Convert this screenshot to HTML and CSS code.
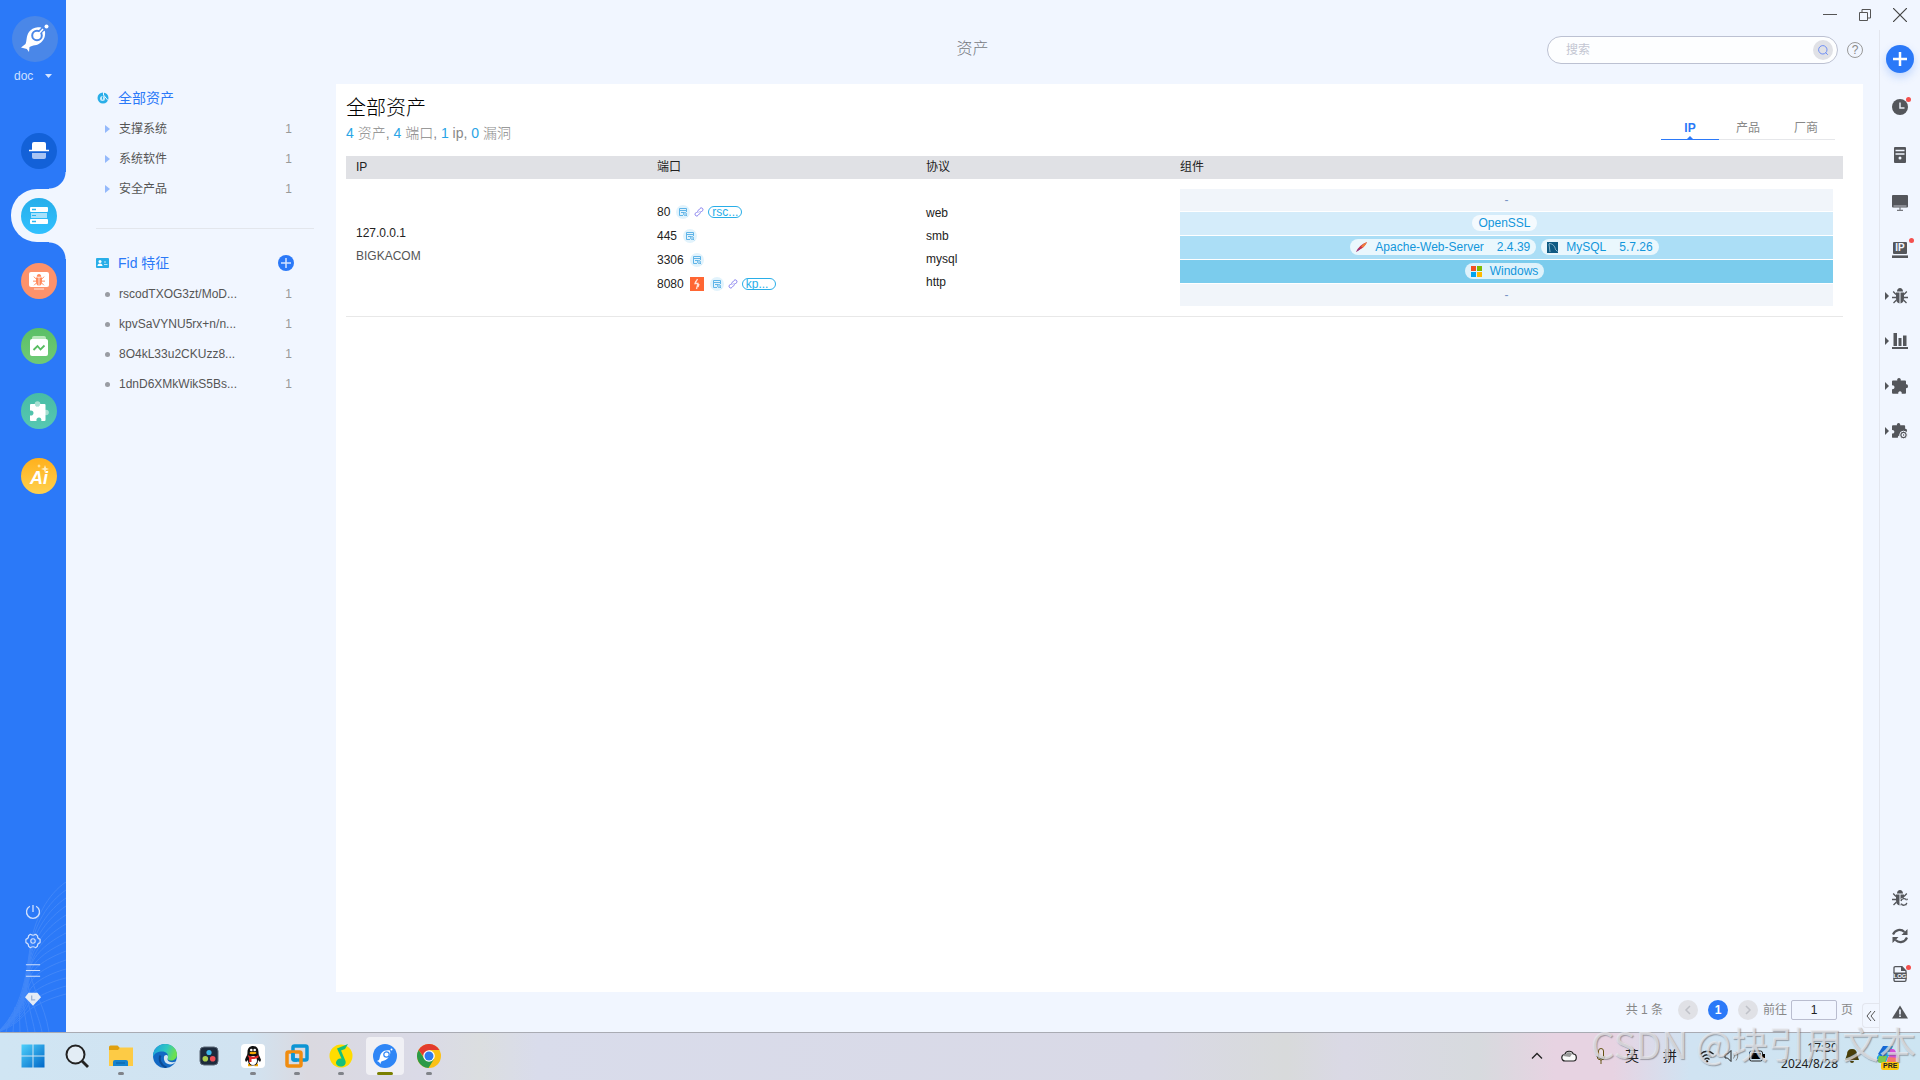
FILE: index.html
```
<!DOCTYPE html>
<html lang="zh-CN">
<head>
    <meta charset="UTF-8">
    <title>资产</title>
    <link rel="stylesheet" href="styles.css">
</head>
<body>
<!-- shared icons -->
<svg class="sprite">
    <symbol id="i-detail" viewBox="0 0 14 14">
        <circle cx="7" cy="7" r="7" fill="#e2f3fc"/>
        <path d="M10.500 7V3.500h-7v7H7M3 5.500h8M5 7.500h3" fill="none" stroke="#5fb4e8"/>
        <circle cx="9" cy="9" r="1.400" fill="none" stroke="#5fb4e8"/>
        <path d="M10 10l1.200 1.200" stroke="#5fb4e8"/>
    </symbol>
    <symbol id="i-link" viewBox="0 0 10 10">
        <path d="M4.200 5.800c-.8-.8-.6-1.700 0-2.300L6 1.500c1.700-1.700 4 .6 2.400 2.300L7.300 5M5.800 4.200c.8.8.6 1.700 0 2.300L4 8.400c-1.700 1.700-4-.6-2.400-2.300L2.700 5" fill="none" stroke="#8079ee"/>
    </symbol>
    <symbol id="i-puzzle" viewBox="0 0 16 16">
        <path d="M1 2.500h4.300C4.800 1 5.800 0 7 0s2.200 1 1.700 2.500H13q1 0 1 1v2.800c1.200-.3 2 .6 2 1.900s-.8 2.200-2 1.900V15q0 .8-1 .8H9.700c.3-1.600-.5-2.600-1.700-2.600s-2 1-1.700 2.600H1q-1 0-1-1v-3.600c1.500.2 2.500-.6 2.500-1.900S1.500 7.200 0 7.400V3.500q0-1 1-1z"/>
    </symbol>
    <symbol id="i-bug" viewBox="0 0 16 16">
        <path d="M5 3.500C5 1.500 6.300 0 8 0s3 1.500 3 3.500zM4 4.500h3.500V15.500C5 15 4 13 4 10zM8.500 4.500H12V10c0 3-1 5-3.500 5.500z"/>
        <path d="M4 6.500L1.200 3.500M4 9.500H0M4.500 12l-3 3M12 6.500l2.800-3M12 9.500h4M11.500 12l3 3" fill="none" stroke="currentColor" stroke-width="1.300"/>
    </symbol>
</svg>

<div class="window">
    <div class="sidebar">
        <svg class="waves" viewBox="0 0 66 150" fill="none" stroke="#fff">
            <path d="M0 148C22 125 26 95 30 66S48 12 66 0"/>
            <path d="M0 148C24 125 26 97 30 70S48 20 66 8"/>
            <path d="M0 149C24 127 26 99 30 74S48 28 66 16"/>
            <path d="M0 149C24 128 26 101 30 78S48 36 66 24"/>
            <path d="M0 149C24 129 26 103 30 82S48 44 66 33"/>
            <path d="M0 149C24 130 26 105 30 86S48 52 66 42"/>
            <path d="M0 149C24 131 26 107 29 90S48 60 66 51"/>
            <path d="M0 149C24 132 26 109 29 94S48 68 66 60"/>
            <path d="M0 149C22 133 26 111 29 98S48 76 66 69"/>
            <path d="M0 149C22 134 26 115 29 104S48 84 66 78"/>
            <path d="M0 149C22 135 26 119 29 110S48 92 66 87"/>
            <path d="M0 149C22 136 26 123 29 116S48 100 66 96"/>
            <path d="M0 149C22 138 26 127 29 122S48 109 66 104"/>
            <path d="M0 149C20 142 25 130 32 126S50 116 66 112"/>
            <path d="M28 80C32 110 44 120 49 150M26 92C30 120 38 130 42 150M25 100C28 124 32 135 35 150M22 110C24 130 26 140 28 150M19 118L20 150M15 125L13 150M10 135L6 150"/>
        </svg>
        <div class="side-top">
            <a class="logo" href="#" title="logo">
                <svg width="30" height="30" viewBox="0 0 30 30">
                    <path d="M5.500 20c1.500-3 .5-8 3.500-12 3.500-4.500 9-5 12-4.500l2 1.500 2 2.500c.5 4-.5 8-4 11-4 3.500-8.500 2.500-11.500 4.500L9 28l-2.200-3L1 23.500z" fill="#fff"/>
                    <circle cx="17" cy="11.500" r="4.800" fill="#fff" stroke="#4a87e8" stroke-width="2"/>
                    <path d="M20 8l4-4" stroke="#4a87e8" stroke-width="4"/>
                    <path d="M19 9.500l4-4.500" stroke="#fff" stroke-width="1.500"/>
                    <circle cx="26.500" cy="2.500" r="2" fill="#fff"/>
                </svg>
            </a>
            <div class="project">
                <select aria-label="项目"><option>doc</option></select>
                <svg width="7" height="4" viewBox="0 0 7 4"><path d="M0 0h7L3.500 4z" fill="#d5e4ff"/></svg>
            </div>
        </div>
        <div class="side-nav">
            <a href="#" title="首页"><span class="dot dark">
                <svg width="20" height="18" viewBox="0 0 20 18">
                    <path d="M3 8.500V2q0-2 2-2h10q2 0 2 2v6.500z" fill="#fff"/>
                    <path d="M3 11h14v4q0 2-2 2H5q-2 0-2-2z" fill="#a9c4f3"/>
                    <path d="M0 8.500h20" stroke="#fff" stroke-width="1.500"/>
                </svg>
            </span></a>
            <a href="#" title="资产" class="active"><span class="dot cyan">
                <svg width="18" height="18" viewBox="0 0 18 18">
                    <rect x="0" y="0" width="18" height="5" rx="1" fill="#fff"/>
                    <rect x="1" y="6" width="16" height="5" fill="#a8e1fb"/>
                    <rect x="0" y="12" width="18" height="5" rx="1" fill="#fff"/>
                    <path d="M2 2.500h4M2 14.500h4" stroke="#2cb6f2" stroke-width="1.500"/>
                    <path d="M2 8.500h4" stroke="#2cb6f2"/>
                </svg>
            </span></a>
            <a href="#" title="漏洞"><span class="dot orange">
                <svg width="20" height="20" viewBox="0 0 20 20">
                    <rect x="0" y="1" width="20" height="15" rx="2" fill="#fff"/>
                    <path d="M5 18h10" stroke="#ffc9b5" stroke-width="1.500"/>
                    <svg x="4" y="3" width="12" height="12" color="#ff8a5c" fill="#ff8a5c"><use href="#i-bug"/></svg>
                </svg>
            </span></a>
            <a href="#" title="报告"><span class="dot green">
                <svg width="18" height="20" viewBox="0 0 18 20">
                    <rect x="2" y="0" width="14" height="5" rx="2" fill="#b9e8bb"/>
                    <rect x="0" y="3" width="18" height="17" rx="2" fill="#fff"/>
                    <path d="M3.500 14l4-4 3 3.500 4-4" fill="none" stroke="#57bd60" stroke-width="1.800"/>
                </svg>
            </span></a>
            <a href="#" title="插件"><span class="dot teal">
                <svg width="20" height="20" viewBox="0 0 20 20">
                    <circle cx="8.500" cy="3" r="2.800" fill="#a7e0d2"/>
                    <circle cx="17" cy="11.500" r="2.800" fill="#a7e0d2"/>
                    <path d="M1 4q0-1 1-1h4c0 2 1 2.500 2.500 2.500S11 5 11 3h4.500q1 0 1 1v15q0 1-1 1h-3.200c.5-2-.6-3.500-2.300-3.500s-3 1.500-2.500 3.500H2q-1 0-1-1v-4.500c2.300.5 3.500-.8 3.500-2.500S3.300 9 1 9.500z" fill="#fff"/>
                </svg>
            </span></a>
            <a href="#" title="AI"><span class="dot yellow">
                <b>Ai</b>
                <svg width="12" height="10" viewBox="0 0 12 10">
                    <path d="M8 1l1 3 3 1-3 1-1 3-1-3-3-1 3-1zM2 0l.6 1.400L4 2l-1.400.6L2 4l-.6-1.400L0 2l1.400-.6z" fill="#ffedc0"/>
                </svg>
            </span></a>
        </div>
        <div class="side-tools">
            <button title="退出"><svg viewBox="0 0 18 18"><path d="M9 1v8M5.500 2.500a7.300 7.300 0 1 0 7 0" fill="none" stroke="#cfdffc" stroke-width="1.500"/></svg></button>
            <button title="设置"><svg viewBox="0 0 18 18"><path d="M6 1.500Q9 3.500 12 1.500L14 3Q13.500 6 17 7.200V10.800Q13.500 12 14 15L12 16.500Q9 14.500 6 16.500L4 15Q4.500 12 1 10.800V7.200Q4.500 6 4 3z" fill="none" stroke="#cfdffc" stroke-width="1.300" stroke-linejoin="round"/><circle cx="9" cy="9" r="2.500" fill="none" stroke="#cfdffc" stroke-width="1.300"/></svg></button>
            <button title="菜单"><svg viewBox="0 0 18 18"><path d="M1 3h16M1 9.500h16M1 16h16" stroke="#cfdffc" stroke-width="1.200"/></svg></button>
            <button title="授权"><svg viewBox="0 0 18 18"><path d="M4 2h10l4 5-9 9.500L0 7z" fill="#e4ebf6"/><path d="M7.500 5v5h4" fill="none" stroke="#9fb4d6" stroke-width="1.500"/></svg></button>
        </div>
    </div>

    <div class="body">
        <div class="titlebar">
            <button title="最小化"><svg viewBox="0 0 14 14"><path d="M0 6.500h14" stroke="#555"/></svg></button>
            <button title="还原"><svg viewBox="0 0 14 14"><path d="M1.500 4.500h8v8h-8zM4 4V1.500h8.500v8.500H10" fill="none" stroke="#555"/></svg></button>
            <button title="关闭"><svg viewBox="0 0 14 14"><path d="M0 0l14 14M14 0L0 14" stroke="#444" stroke-width="1.200"/></svg></button>
        </div>
        <div class="row">
            <div class="workspace">
                <div class="header">
                    <span></span>
                    <h1>资产</h1>
                    <div class="header-right">
                        <div class="search">
                            <input type="text" placeholder="搜索" aria-label="搜索">
                            <button title="搜索"><svg width="10" height="10" viewBox="0 0 10 10"><circle cx="4.800" cy="4.800" r="4.200" fill="none" stroke="#6d8df5"/><path d="M7.500 7.500L9.800 9.800" stroke="#6d8df5"/></svg></button>
                        </div>
                        <a class="help" href="#">?</a>
                    </div>
                </div>
                <div class="columns">
                    <div class="filters">
                        <div class="group">
                            <h2>
                                <svg width="13" height="12" viewBox="0 0 13 12"><circle cx="7" cy="6" r="5.500" fill="#29aee8"/><path d="M7.500 0v3l4.500 5.500" fill="none" stroke="#f1f6ff"/><circle cx="6.500" cy="6.500" r="2.500" fill="#c8ebfa"/><path d="M6.500 4.500v3" stroke="#29aee8"/></svg>
                                全部资产
                            </h2>
                            <ul>
                                <li class="tri"><a href="#">支撑系统</a><span>1</span></li>
                                <li class="tri"><a href="#">系统软件</a><span>1</span></li>
                                <li class="tri"><a href="#">安全产品</a><span>1</span></li>
                            </ul>
                        </div>
                        <div class="group">
                            <h2>
                                <svg width="13" height="10" viewBox="0 0 13 10"><rect width="13" height="10" rx="1" fill="#29aee8"/><circle cx="4" cy="3.500" r="1.500" fill="#fff"/><path d="M1.500 8q0-2.500 2.500-2.500T6.500 8z" fill="#fff"/><path d="M8 4h2M8 6.500h3.500" stroke="#b9e5f8"/></svg>
                                Fid 特征
                                <button title="添加"><svg width="16" height="16" viewBox="0 0 16 16"><circle cx="8" cy="8" r="8" fill="#2b79f8"/><path d="M3 8h10M8 3v10" stroke="#d5e4ff" stroke-width="1.500"/></svg></button>
                            </h2>
                            <ul>
                                <li class="pt"><a href="#">rscodTXOG3zt/MoD...</a><span>1</span></li>
                                <li class="pt"><a href="#">kpvSaVYNU5rx+n/n...</a><span>1</span></li>
                                <li class="pt"><a href="#">8O4kL33u2CKUzz8...</a><span>1</span></li>
                                <li class="pt"><a href="#">1dnD6XMkWikS5Bs...</a><span>1</span></li>
                            </ul>
                        </div>
                    </div>

                    <div class="content">
                        <div class="panel">
                            <div class="panel-head">
                                <div>
                                    <h3>全部资产</h3>
                                    <p><b>4</b> 资产, <b>4</b> 端口, <b>1</b> ip, <b>0</b> 漏洞</p>
                                </div>
                                <div class="tabs">
                                    <a href="#" class="on">IP</a>
                                    <a href="#">产品</a>
                                    <a href="#">厂商</a>
                                </div>
                            </div>
                            <table>
                                <thead>
                                <tr>
                                    <th class="c-ip">IP</th>
                                    <th class="c-port">端口</th>
                                    <th class="c-proto">协议</th>
                                    <th>组件</th>
                                </tr>
                                </thead>
                                <tbody>
                                <tr>
                                    <td class="lines addr">
                                        <div>127.0.0.1</div>
                                        <div class="host">BIGKACOM</div>
                                    </td>
                                    <td class="ports">
                                        <div><span>80</span><svg class="detail"><use href="#i-detail"/></svg><svg class="link"><use href="#i-link"/></svg><button>rsc...</button></div>
                                        <div><span>445</span><svg class="detail"><use href="#i-detail"/></svg></div>
                                        <div><span>3306</span><svg class="detail"><use href="#i-detail"/></svg></div>
                                        <div><span>8080</span><svg class="burp" viewBox="0 0 14 14"><rect width="14" height="14" fill="#ff6633"/><path d="M7.500 2L5 6.500h3L6.500 12M6 4l-1 2.500M9 7l-1 3" fill="none" stroke="#ffe2d8" stroke-width="1.300"/></svg><svg class="detail"><use href="#i-detail"/></svg><svg class="link"><use href="#i-link"/></svg><button>kp...</button></div>
                                    </td>
                                    <td class="lines">
                                        <div>web</div>
                                        <div>smb</div>
                                        <div>mysql</div>
                                        <div>http</div>
                                    </td>
                                    <td class="stack">
                                        <div class="layer empty">-</div>
                                        <div class="layer l1"><span class="tag">OpenSSL</span></div>
                                        <div class="layer l2">
                                            <span class="tag"><svg width="11" height="11" viewBox="0 0 11 11"><path d="M0 10Q3 3 11 0 9 5 3 8z" fill="#c8324b"/><path d="M5 4.500Q7 1.500 11 0 10 3 7 5.500z" fill="#f0803c"/><path d="M0 10L3 6l1 1.500z" fill="#8a3a8c"/></svg>Apache-Web-Server<i>2.4.39</i></span>
                                            <span class="tag"><svg width="11" height="11" viewBox="0 0 11 11"><rect width="11" height="11" fill="#0f5a83"/><path d="M2 1.500c4 0 6 3 6.500 6l2 2M2 2c0 3 1 5 1 8" fill="none" stroke="#a9cde0" stroke-width=".8"/></svg>MySQL<i>5.7.26</i></span>
                                        </div>
                                        <div class="layer l3">
                                            <span class="tag"><svg width="11" height="11" viewBox="0 0 11 11"><path d="M0 0h5v5H0z" fill="#f25022"/><path d="M6 0h5v5H6z" fill="#7fba00"/><path d="M0 6h5v5H0z" fill="#00a4ef"/><path d="M6 6h5v5H6z" fill="#ffb900"/></svg>Windows</span>
                                        </div>
                                        <div class="layer empty">-</div>
                                    </td>
                                </tr>
                                </tbody>
                            </table>
                        </div>
                        <div class="pager">
                            <span>共 1 条</span>
                            <button title="上一页"><svg width="8" height="10" viewBox="0 0 8 10"><path d="M6 1L2 5l4 4" fill="none" stroke="#bfc1c8" stroke-width="1.500"/></svg></button>
                            <button class="cur">1</button>
                            <button title="下一页"><svg width="8" height="10" viewBox="0 0 8 10"><path d="M2 1l4 4-4 4" fill="none" stroke="#bfc1c8" stroke-width="1.500"/></svg></button>
                            <label>前往<input type="text" value="1">页</label>
                        </div>
                    </div>
                </div>
                <button class="fold" title="收起"><svg width="10" height="12" viewBox="0 0 10 12"><path d="M5 1L1 6l4 5M9 1L5 6l4 5" fill="none" stroke="#555"/></svg></button>
            </div>

            <div class="rail">
                <button class="add" title="新建"><svg width="28" height="28" viewBox="0 0 28 28"><path d="M14 7v14M7 14h14" stroke="#fff" stroke-width="2.500"/></svg></button>
                <button class="tall red"><svg viewBox="0 0 16 16"><circle cx="8" cy="8" r="8"/><path d="M8 3.500V9h4.500" fill="none" stroke="#e6eaf2" stroke-width="1.500"/></svg></button>
                <button class="tall"><svg viewBox="0 0 16 16"><rect x="2" y="0" width="12" height="16" rx="1"/><path d="M3.500 3.500h9M3.500 7h9" stroke="#f1f6ff" stroke-width="1.500"/><circle cx="8" cy="11" r="1.500" fill="#f1f6ff"/></svg></button>
                <button class="tall"><svg viewBox="0 0 16 16"><rect x="0" y="0" width="16" height="12.500" rx="1"/><path d="M1.500 11h13" stroke="#9a9ca3" stroke-width="1.500"/><path d="M8 12v3M5 15.300h6" stroke="#77797f" stroke-width="1.200"/></svg></button>
                <button class="red ip"><svg viewBox="0 0 16 16"><rect x="1" y="0" width="14" height="12" rx="1"/><path d="M0 14.700h16" stroke="#54565b" stroke-width="2.600"/></svg><b>IP</b></button>
                <button class="more"><svg viewBox="0 0 16 16"><use href="#i-bug"/></svg></button>
                <button class="more"><svg viewBox="0 0 16 16"><path d="M1.500 0H5v13H1.500zM6.500 5H9.500v8h-3zM11 2.500h3.500V13H11zM0 14h16v2H0z"/></svg></button>
                <button class="more"><svg viewBox="0 0 16 16"><use href="#i-puzzle"/></svg></button>
                <button class="more"><svg viewBox="0 0 16 16"><use href="#i-puzzle" width="15" height="15"/><circle cx="11.500" cy="12" r="3.800" stroke="#f1f6ff"/><circle cx="11.500" cy="12" r="2" fill="#f1f6ff"/><path d="M11 11l1.500 1-1.500 1z"/></svg></button>
                <div class="rail-bottom">
                    <button><svg viewBox="0 0 16 16"><svg width="14" height="14" viewBox="0 0 16 16"><use href="#i-bug"/></svg><circle cx="11.800" cy="11.800" r="4" fill="#f1f6ff"/><path d="M9 11a3 3 0 0 1 5.600-.8M14.800 12.800a3 3 0 0 1-5.600.8" fill="none" stroke="#54565b" stroke-width="1.400"/></svg></button>
                    <button><svg viewBox="0 0 16 16"><path d="M1 6.500C3 1.500 9 .5 12.500 4M15 9.500c-2 5-8 6-11.500 2.500" fill="none" stroke="#54565b" stroke-width="2.200"/><path d="M15.500 1v6H9.500zM.5 15V9h6z"/></svg></button>
                    <button class="red log"><svg viewBox="0 0 16 16"><path d="M2 7V2q0-1.300 1.300-1.300H10L14 5v9q0 1.300-1.300 1.300H3.300Q2 15.300 2 14v-2" fill="none" stroke="#54565b" stroke-width="1.300"/><path d="M9 0v5h5zM1.500 6.500h13V13h-13z"/></svg><b>LOG</b></button>
                    <button><svg viewBox="0 0 16 16"><path d="M8 1.500l8 13H0z"/><path d="M8 5.500v5M8 11.500v1.600" stroke="#f1f6ff" stroke-width="1.600"/></svg></button>
                </div>
            </div>
        </div>
    </div>
</div>

<div class="taskbar">
    <div class="apps">
        <button title="开始"><svg viewBox="0 0 24 24"><defs><linearGradient id="g-win" x2="1" y2="1"><stop stop-color="#4fd0fb"/><stop offset="1" stop-color="#0067c8"/></linearGradient></defs><path d="M.5.5h11v11H.5zM12.500.5h11v11h-11zM.5 12.500h11v11H.5zM12.500 12.500h11v11h-11z" fill="url(#g-win)"/></svg></button>
        <button title="搜索"><svg viewBox="0 0 24 24"><circle cx="10.500" cy="10.500" r="9" fill="#e3edf5" stroke="#222" stroke-width="2"/><path d="M17 17l6 6" stroke="#222" stroke-width="2.800"/></svg></button>
        <button title="文件" class="run"><svg viewBox="0 0 24 24"><path d="M0 3q0-1.500 1.500-1.500h7L11 4v4H0z" fill="#e0a010"/><path d="M0 6h9l2-2.500h13V22H0z" fill="#fdcb45"/><path d="M4 22v-4q0-2 2-2h11q2 0 2 2v4z" fill="#1583cf"/><path d="M7 19h9" stroke="#0a5ea3"/></svg></button>
        <button title="Edge"><svg viewBox="0 0 24 24"><defs><linearGradient id="g-edge" x2="1" y2=".3"><stop stop-color="#1b9de2"/><stop offset=".6" stop-color="#2fc8c0"/><stop offset="1" stop-color="#6be04f"/></linearGradient></defs><circle cx="12" cy="12" r="12" fill="#1269c4"/><path d="M0 11C1 4 6 0 12 0c7 0 12 5 12 10.500 0 4-3 6-6 6s-4-1.500-3.500-3C16 10 13 7.500 9 7.500S1.500 9 0 13z" fill="url(#g-edge)"/><path d="M11 13c0-2 3-3 3.800-1 .7 2-1 2.500.2 4.500s5 2 8 1c-2.500 2.500-5 3.500-8 2.500-3-1-4.500-4-4-7z" fill="#d3e5f2"/><path d="M7.500 11.500c-2 4 0 10 6 12" fill="none" stroke="#0c4a94" stroke-width="2"/></svg></button>
        <button title="Resolve"><svg viewBox="0 0 24 24"><rect x="3" y="3" width="18" height="18" rx="4" fill="#1d2a3c" stroke="#5a6675"/><circle cx="12" cy="8.500" r="2.600" fill="#3bb6e8"/><circle cx="8.300" cy="14.800" r="2.800" fill="#a8cc4b"/><circle cx="15.700" cy="14.800" r="2.800" fill="#ec4d55"/></svg></button>
        <button title="QQ" class="run"><svg viewBox="0 0 24 24"><rect width="24" height="24" rx="4" fill="#fff"/><path d="M7 21h3.500M13.500 21H17" stroke="#f5a800" stroke-width="2.500"/><path d="M4 16c1-4 2.500-4 2.500-8C6.500 4 9 2 12 2s5.500 2 5.500 6c0 4 1.500 4 2.500 8l-1 2-2-2c0 4-2 5.500-5 5.500S7 20 7 16l-2 2z" fill="#111"/><ellipse cx="12" cy="16.500" rx="4" ry="4.500" fill="#fff"/><path d="M6.500 11q5.500 3.500 11 0v2.500q-4 2-7 1.500V18H8v-4z" fill="#e02828"/><ellipse cx="12" cy="9" rx="3.500" ry="1.200" fill="#f5a800"/><circle cx="10.300" cy="6" r="1.300" fill="#fff"/><circle cx="13.700" cy="6" r="1.300" fill="#fff"/></svg></button>
        <button title="VMware" class="run"><svg viewBox="0 0 24 24" fill="none" stroke-width="3.500"><rect x="8" y="2" width="14" height="14" rx="1.500" stroke="#0d95d4"/><rect x="2" y="8" width="14" height="14" rx="1.500" stroke="#f08c0f"/><path d="M8 9v5.500q0 1.500 1.500 1.500H12" stroke="#0d95d4"/></svg></button>
        <button title="QQ音乐" class="run"><svg viewBox="0 0 24 24"><circle cx="12" cy="12" r="11.500" fill="#ffdc00"/><path d="M8 4.500L19 0l-3 5-4 1.500 4.500 10.500c1 4-2.500 6-5.500 5.500s-5-3-3.500-5.500 3-2.500 5-2.500z" fill="#14c07c"/></svg></button>
        <button title="Goby" class="run front"><svg viewBox="0 0 24 24"><circle cx="12" cy="12" r="12" fill="#2f86f6"/><path d="M6 16c1-2 .5-4.500 2.500-7S14 6 17 6.500c1 3-.5 6-2.500 8S10 16.500 8 17.800L7.500 20 6 18l-2-1z" fill="#fff"/><circle cx="13.500" cy="10.500" r="2.700" fill="#fff" stroke="#2f86f6" stroke-width="1.200"/><circle cx="18.500" cy="5.500" r="1" fill="#fff"/></svg></button>
        <button title="Chrome" class="run"><svg viewBox="0 0 24 24"><circle cx="12" cy="12" r="12" fill="#fbc116"/><path d="M1.600 6A12 12 0 0 1 22.400 6H12L8 14.500z" fill="#e33b2e"/><path d="M1.600 6A12 12 0 0 0 11.500 24L17 15l-9 .5z" fill="#2a9a48"/><circle cx="12" cy="12" r="5.800" fill="#fff"/><circle cx="12" cy="12" r="4.500" fill="#2f7bf0"/></svg></button>
    </div>
    <div class="tray">
        <button title="更多"><svg viewBox="0 0 16 16"><path d="M3 10.500l5-5 5 5" fill="none" stroke="#222" stroke-width="1.300"/></svg></button>
        <button title="云"><svg viewBox="0 0 16 16"><path d="M.8 9.500c0-2 1.500-3 3-3 1-4 7-4.500 8.500-.5 1.700 0 3 1.500 3 3.500S14 13 12.500 13H4C2 13 .8 11.500.8 9.500z" fill="#fafafa" stroke="#222" stroke-width="1.200"/><path d="M2 8c1-2 2-2 3-2 1-2.500 5-2.500 6 0L9 9z" fill="#999"/></svg></button>
        <button title="麦克风"><svg viewBox="0 0 16 16"><rect x="5.500" y=".5" width="5" height="10" rx="2.500" fill="#eadfe6" stroke="#655212"/><path d="M4 8q0 4 4 4t4-4M8 12v4" fill="none" stroke="#655212"/></svg></button>
        <span class="ime">英</span>
        <span class="ime">拼</span>
        <div class="status">
            <svg viewBox="0 0 16 16"><path d="M1 6.500q7-6.500 14 0M3.500 9q4.500-4.500 9 0M5.500 11.500q2.500-2.500 5 0" fill="none" stroke="#222" stroke-width="1.200"/><circle cx="8" cy="13.500" r="1.200"/></svg>
            <svg viewBox="0 0 16 16"><path d="M1 6h2.500L7 2.500v11L3.500 10H1z" fill="none" stroke="#222"/><path d="M9.500 5.500q2 2.500 0 5M12 3.500q3.500 4.500 0 9" fill="none" stroke="#888"/></svg>
            <svg viewBox="0 0 16 16"><rect x=".5" y="3" width="13" height="10" rx="2" fill="none" stroke="#222"/><rect x="2.500" y="5" width="9" height="6"/><path d="M14 6h2v4h-2zM1 1l5 6"/></svg>
        </div>
        <div class="clock"><div>17:30</div><div>2024/8/28</div></div>
        <svg class="bell" viewBox="0 0 16 16"><path d="M8 1q5 0 5 5.500L15 12H1l2-5.500Q3 1 8 1zM6 13h4q0 2-2 2t-2-2z" fill="#4a3f08"/></svg>
        <div class="copilot">
            <svg viewBox="0 0 24 24"><path d="M9 2h8L10 18H4q-4 0-3-5z" fill="#22a3e6"/><path d="M2 10l5-8h6L8 14z" fill="#1768d4"/><path d="M3 12h8l-2 7H4q-4 0-1-7z" fill="#7bc950"/><path d="M14 5h3q2 0 3 3l3 6q1 5-3 5h-8z" fill="#d54fd6"/><path d="M12 13l11 1q0 6-5 6h-8z" fill="#f47a6a"/></svg>
            <b>PRE</b>
        </div>
    </div>
    <div class="watermark">CSDN @块引用文本</div>
</div>
</body>
</html>
```

FILE: styles.css
```
*{
    margin: 0;
    padding: 0;
    box-sizing: border-box;
}
body{
    height: 100vh;
    display: flex;
    flex-direction: column;
    overflow: hidden;
    background: #f1f6ff;
    color: #222;
    font: 12px/20px "Liberation Sans", "Noto Sans CJK SC", sans-serif;
}
ul{
    list-style: none;
}
a{
    text-decoration: none;
    color: inherit;
}
button, input, select{
    font: inherit;
    color: inherit;
    border: 0;
    background: none;
    outline: none;
}
button{
    cursor: pointer;
}
h1, h2, h3, th{
    font-weight: normal;
}
svg{
    display: block;
    flex: none;
}
.sprite{
    position: absolute;
    width: 0;
    height: 0;
}
.window{
    flex: 1;
    min-height: 0;
    display: flex;
}

/* left bar */
.sidebar{
    position: relative;
    width: 66px;
    flex: none;
    display: flex;
    flex-direction: column;
    background: #2b79f8;
}
.waves{
    position: absolute;
    left: 0;
    bottom: 0;
    width: 66px;
    height: 150px;
    opacity: .1;
}
.side-top{
    height: 118px;
    padding: 16px 0 0 12px;
}
.logo{
    display: flex;
    align-items: center;
    justify-content: center;
    width: 46px;
    height: 46px;
    border-radius: 50%;
    background: #4a87e8;
}
.project{
    display: flex;
    align-items: center;
    margin-top: 4px;
    padding-left: 2px;
}
.project select{
    appearance: none;
    width: 31px;
    color: #cfe0ff;
}
.side-nav a{
    position: relative;
    display: flex;
    align-items: center;
    height: 53px;
    margin: 6px 0 12px 11px;
    padding-left: 10px;
}
.side-nav .active{
    background: #f1f6ff;
    border-radius: 26px 0 0 26px;
}
.side-nav .active:before,
.side-nav .active:after{
    content: "";
    position: absolute;
    right: 0;
    width: 17px;
    height: 17px;
}
.side-nav .active:before{
    top: -17px;
    background: radial-gradient(circle at 0 0, #2b79f8 16px, #f1f6ff 17px);
}
.side-nav .active:after{
    bottom: -17px;
    background: radial-gradient(circle at 0 100%, #2b79f8 16px, #f1f6ff 17px);
}
.dot{
    position: relative;
    display: flex;
    align-items: center;
    justify-content: center;
    width: 36px;
    height: 36px;
    border-radius: 50%;
}
.dark{ background: #1361d8; }
.cyan{ background: linear-gradient(#27aeea, #30c0ff); }
.orange{ background: #fd926b; }
.green{ background: linear-gradient(#5bbf66, #6fcb76); }
.teal{ background: linear-gradient(#48bca5, #56c8b2); }
.yellow{ background: linear-gradient(#ffb01c, #ffd04e); }
.yellow b{
    color: #fff;
    font-size: 18px;
    font-style: italic;
    padding-top: 5px;
}
.yellow svg{
    position: absolute;
    top: 6px;
    right: 8px;
}
.side-tools{
    margin-top: auto;
    padding-bottom: 19px;
    position: relative;
    display: flex;
    flex-direction: column;
    align-items: center;
}
.side-tools button{
    height: 29px;
}
.side-tools svg{
    width: 16px;
    height: 16px;
}

/* top */
.body{
    flex: 1;
    min-width: 0;
    display: flex;
    flex-direction: column;
}
.titlebar{
    display: flex;
    justify-content: flex-end;
    gap: 21px;
    height: 30px;
    padding-right: 13px;
}
.titlebar svg{
    width: 14px;
    height: 14px;
}
.row{
    flex: 1;
    min-height: 0;
    display: flex;
}
.workspace{
    position: relative;
    flex: 1;
    min-width: 0;
    display: flex;
    flex-direction: column;
}
.header{
    display: grid;
    grid-template-columns: 1fr auto 1fr;
    height: 54px;
}
.header h1{
    font-size: 16px;
    font-weight: 300;
    line-height: 37px;
    color: #777a82;
}
.header-right{
    display: flex;
    justify-content: flex-end;
    gap: 9px;
    padding: 6px 16px 0 0;
}
.search{
    display: flex;
    align-items: center;
    width: 291px;
    height: 28px;
    padding: 0 4px 0 18px;
    border: 1px solid #bcc1d2;
    border-radius: 14px;
    background: #fdfeff;
}
.search input{
    flex: 1;
    min-width: 0;
}
.search input::placeholder{
    color: #c3c6d2;
}
.search button{
    display: flex;
    align-items: center;
    justify-content: center;
    width: 20px;
    height: 20px;
    border-radius: 50%;
    background: #e0e1e6;
}
.help{
    width: 16px;
    height: 16px;
    margin-top: 6px;
    border: 1px solid #999;
    border-radius: 50%;
    color: #888;
    line-height: 14px;
    text-align: center;
}
.columns{
    flex: 1;
    min-height: 0;
    display: flex;
}

/* filter list */
.filters{
    width: 270px;
    flex: none;
    padding: 0 22px 0 30px;
}
.group{
    padding-bottom: 24px;
    margin-bottom: 20px;
    border-bottom: 1px solid #e3e6ec;
}
.group:last-child{
    border: 0;
}
.group h2{
    display: flex;
    align-items: center;
    height: 30px;
    padding: 0 20px 2px 0;
    font-size: 14px;
    color: #2b79f8;
}
.group h2 > svg{
    margin-right: 9px;
}
.group h2 button{
    margin-left: auto;
}
.group li{
    display: flex;
    align-items: center;
    height: 30px;
    padding: 0 22px 0 9px;
    color: #555;
}
.group li span{
    margin-left: auto;
    color: #999;
}
.tri:before{
    content: "";
    border: 4px solid transparent;
    border-left: 5px solid #94b9fb;
    border-right: 0;
    margin-right: 9px;
}
.pt:before{
    content: "";
    width: 5px;
    height: 5px;
    border-radius: 50%;
    background: #999ca3;
    margin-right: 9px;
}

/* main panel */
.content{
    flex: 1;
    min-width: 0;
    display: flex;
    flex-direction: column;
    padding-right: 16px;
}
.panel{
    flex: 1;
    padding: 10px 20px 0 10px;
    background: #fff;
}
.panel-head{
    display: flex;
    justify-content: space-between;
    align-items: flex-end;
    margin-bottom: 12px;
}
.panel h3{
    font-size: 20px;
    font-weight: 300;
    line-height: 28px;
    color: #000;
}
.panel p{
    font-size: 14px;
    line-height: 22px;
    font-weight: 300;
    color: #888;
}
.panel p b{
    font-weight: normal;
    color: #29a5e6;
}
.tabs{
    display: flex;
    margin: 0 8px 4px 0;
}
.tabs a{
    position: relative;
    width: 58px;
    height: 26px;
    line-height: 28px;
    text-align: center;
    color: #888;
    border-bottom: 1px solid #e6e7ea;
}
.tabs .on{
    color: #2b79f8;
    font-weight: bold;
    border-color: #2b79f8;
}
.tabs .on:after{
    content: "";
    position: absolute;
    left: 26px;
    bottom: 0;
    border: 3px solid transparent;
    border-bottom-color: #2b79f8;
    border-top: 0;
}
table{
    width: 100%;
    table-layout: fixed;
    border-collapse: collapse;
}
.c-ip{ width: 301px; }
.c-port{ width: 269px; }
.c-proto{ width: 254px; }
th{
    height: 23px;
    padding: 0 10px 2px;
    background: #e0e1e5;
    text-align: left;
}
td{
    padding: 10px;
    border-bottom: 1px solid #e8e8e8;
}
.lines div{
    line-height: 23px;
}
.addr{
    padding-bottom: 15px;
}
.lines .host{
    color: #555;
}
.ports div{
    display: flex;
    align-items: center;
    height: 24px;
}
.ports span{
    margin-right: 6px;
}
.ports svg{
    width: 14px;
    height: 14px;
}
.ports .burp{
    margin-right: 6px;
}
.ports .link{
    width: 10px;
    height: 10px;
    margin: 0 4px;
}
.ports button{
    width: 34px;
    height: 12px;
    padding: 0 3px;
    border: 1px solid #29aee8;
    border-radius: 6px;
    color: #29aee8;
    line-height: 10px;
    text-align: left;
    overflow: hidden;
}
.stack{
    color: #1296db;
}
.layer{
    display: flex;
    align-items: center;
    justify-content: center;
    gap: 5px;
    height: 23px;
    margin-bottom: 1px;
    padding: 0 4px 1px 0;
}
.empty{
    height: 22px;
    padding-right: 0;
    background: #f1f5fa;
    color: #7a93c4;
}
.layer:last-child{
    margin-bottom: 0;
}
.l1{ background: #d4ecfa; }
.l2{ background: #abdef6; }
.l3{ background: #7bcced; }
.tag{
    display: flex;
    align-items: center;
    height: 16px;
    padding: 0 6px;
    border-radius: 8px;
    background: rgba(255, 255, 255, .75);
}
.tag svg{
    margin-right: 8px;
}
.tag i{
    font-style: normal;
    margin-left: 13px;
}

/* pager */
.pager{
    display: flex;
    align-items: center;
    justify-content: flex-end;
    height: 40px;
    padding: 0 10px 4px 0;
    color: #888;
}
.pager > span{
    margin-right: 15px;
}
.pager button{
    display: flex;
    align-items: center;
    justify-content: center;
    width: 20px;
    height: 20px;
    margin-right: 10px;
    border-radius: 50%;
    background: #e0e1e6;
}
.pager .cur{
    background: #2b79f8;
    color: #fff;
    font-weight: bold;
}
.pager label{
    display: flex;
    margin-left: -5px;
}
.pager input{
    width: 46px;
    height: 20px;
    margin: 0 4px;
    border: 1px solid #b9bdcf;
    border-radius: 2px;
    color: #222;
    text-align: center;
}
.fold{
    position: absolute;
    right: 0;
    bottom: 4px;
    width: 17px;
    height: 25px;
    padding-left: 3px;
    border: 1px solid #e3e6ee;
    border-right: 0;
    border-radius: 4px 0 0 4px;
}

/* right bar */
.rail{
    width: 41px;
    flex: none;
    display: flex;
    flex-direction: column;
    align-items: center;
    padding-top: 15px;
    border-left: 1px solid #e3e6ee;
    color: #54565b;
    fill: #54565b;
}
.rail button{
    position: relative;
    display: flex;
    align-items: center;
    justify-content: center;
    width: 40px;
    height: 45px;
}
.rail button.tall{
    height: 48px;
}
.rail button.ip{
    height: 46px;
}
.rail button svg{
    width: 16px;
    height: 16px;
}
.rail button.add{
    width: 28px;
    height: 28px;
    margin-bottom: 10px;
    border-radius: 50%;
    background: #2b79f8;
    box-shadow: 0 4px 8px rgba(43, 121, 248, .25);
}
.rail button.add svg{
    width: 28px;
    height: 28px;
}
.rail .red:after{
    content: "";
    position: absolute;
    right: 9px;
    top: 14px;
    width: 5px;
    height: 5px;
    border-radius: 50%;
    background: #f4504e;
}
.rail .ip:after{
    right: 6px;
    top: 11px;
}
.rail .log:after{
    top: 10px;
}
.ip b{
    position: absolute;
    top: 15px;
    color: #f1f6ff;
    font-size: 10px;
    line-height: 12px;
}
.log b{
    position: absolute;
    top: 17px;
    color: #f1f6ff;
    font-size: 6px;
    line-height: 8px;
}
.more:before{
    content: "";
    position: absolute;
    left: 5px;
    border: 4px solid transparent;
    border-left: 4px solid #54565b;
    border-right: 0;
}
.rail-bottom{
    margin-top: auto;
    padding-bottom: 1px;
}
.rail .rail-bottom button{
    height: 38px;
}

/* taskbar */
.taskbar{
    position: relative;
    display: flex;
    justify-content: space-between;
    height: 48px;
    flex: none;
    padding-bottom: 1px;
    border-top: 1px solid #a9abb3;
    background: linear-gradient(90deg, #d0e5f3 0, #d1e3f1 13%, #dad9e0 16%, #dadae7 22%, #dbdee0 25%, #d9dceb 28%, #d9d9e6 60%, #d8dadb 67%, #dad9e5 70%, #d7dade 77%, #e7d3e2 81%, #e7d3e2 84%, #d0e3f2 88%, #cde5f2 100%);
}
.apps{
    display: flex;
    align-items: center;
    gap: 6px;
    padding-left: 14px;
}
.apps button{
    position: relative;
    width: 38px;
    height: 38px;
    padding: 7px;
    border-radius: 4px;
}
.apps svg{
    width: 24px;
    height: 24px;
}
.run:after{
    content: "";
    position: absolute;
    left: 16px;
    bottom: 0;
    width: 6px;
    height: 3px;
    border-radius: 2px;
    background: #808389;
}
.apps .front{
    background: rgba(255, 255, 255, .6);
}
.front:after{
    left: 11px;
    width: 16px;
    background: #7a8000;
}
.tray{
    display: flex;
    align-items: center;
    gap: 16px;
    padding-right: 20px;
}
.tray svg{
    width: 16px;
    height: 16px;
}
.ime{
    width: 16px;
    font-size: 14px;
}
.ime + .ime{
    margin-left: 6px;
}
.status{
    display: flex;
    gap: 9px;
    margin-left: 4px;
}
.clock{
    line-height: 16px;
    text-align: right;
    font-family: "Noto Sans", sans-serif;
}
.tray .bell{
    margin-left: -10px;
}
.copilot{
    position: relative;
}
.tray .copilot svg{
    width: 24px;
    height: 24px;
}
.copilot b{
    position: absolute;
    left: 5px;
    bottom: -2px;
    padding: 0 2px;
    border-radius: 2px;
    background: #fdc70c;
    font-size: 7px;
    line-height: 8px;
}
.watermark{
    position: absolute;
    right: 4px;
    top: -12px;
    font: 37px/44px "Noto Sans CJK SC", sans-serif;
    white-space: nowrap;
    color: rgba(235, 235, 238, .7);
    text-shadow: 1px 1px 1px rgba(90, 90, 95, .5);
    pointer-events: none;
}
```
